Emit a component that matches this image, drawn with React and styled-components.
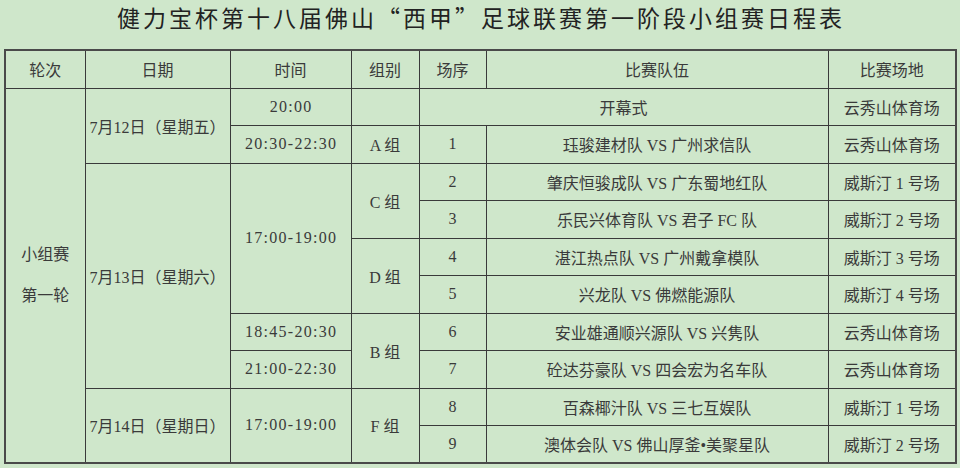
import React from "react";
import styled, { createGlobalStyle } from "styled-components";

const GlobalStyle = createGlobalStyle`
  html, body {
    margin: 0;
    padding: 0;
    background: #cfe7cb;
  }
  body {
    font-family: "Liberation Serif", "Noto Sans CJK SC", serif;
    color: #333;
  }
`;

const rows = [
  { time: "20:00", group: "", opening: true, venue: "云秀山体育场" },
  { time: "20:30-22:30", group: "A 组", no: 1, match: "珏骏建材队 VS 广州求信队", venue: "云秀山体育场" },
  { no: 2, match: "肇庆恒骏成队 VS 广东蜀地红队", venue: "威斯汀 1 号场" },
  { no: 3, match: "乐民兴体育队 VS 君子 FC 队", venue: "威斯汀 2 号场" },
  { no: 4, match: "湛江热点队 VS 广州戴拿模队", venue: "威斯汀 3 号场" },
  { no: 5, match: "兴龙队 VS 佛燃能源队", venue: "威斯汀 4 号场" },
  { no: 6, match: "安业雄通顺兴源队 VS 兴隽队", venue: "云秀山体育场" },
  { no: 7, match: "砼达芬豪队 VS 四会宏为名车队", venue: "云秀山体育场" },
  { no: 8, match: "百森椰汁队 VS 三七互娱队", venue: "威斯汀 1 号场" },
  { no: 9, match: "澳体会队 VS 佛山厚釜•美聚星队", venue: "威斯汀 2 号场" },
];

// spanned cells keyed by the row they start in
const spans = {
  0: [
    { col: "round", rows: 10, text: ["小组赛", "第一轮"] },
    { col: "date", rows: 2, text: "7月12日（星期五）" },
  ],
  2: [
    { col: "date", rows: 6, text: "7月13日（星期六）" },
    { col: "time", rows: 4, text: "17:00-19:00" },
    { col: "group", rows: 2, text: "C 组" },
  ],
  4: [{ col: "group", rows: 2, text: "D 组" }],
  6: [
    { col: "time", rows: 1, text: "18:45-20:30" },
    { col: "group", rows: 2, text: "B 组" },
  ],
  7: [{ col: "time", rows: 1, text: "21:00-22:30" }],
  8: [
    { col: "date", rows: 2, text: "7月14日（星期日）" },
    { col: "time", rows: 2, text: "17:00-19:00" },
    { col: "group", rows: 2, text: "F 组" },
  ],
};

const colOrder = ["round", "date", "time", "group"];

const App = () => {
  return (
    <Page>
      <GlobalStyle />
      <Title>健力宝杯第十八届佛山“西甲”足球联赛第一阶段小组赛日程表</Title>
      <Schedule>
        <colgroup>
          <col style={{ width: 80 }} />
          <col style={{ width: 145 }} />
          <col style={{ width: 121 }} />
          <col style={{ width: 68 }} />
          <col style={{ width: 67 }} />
          <col style={{ width: 342 }} />
          <col style={{ width: 128 }} />
        </colgroup>
        <thead>
          <HeadRow>
            <HeadCell>轮次</HeadCell>
            <HeadCell>日期</HeadCell>
            <HeadCell>时间</HeadCell>
            <HeadCell>组别</HeadCell>
            <HeadCell>场序</HeadCell>
            <HeadCell>比赛队伍</HeadCell>
            <HeadCell>比赛场地</HeadCell>
          </HeadRow>
        </thead>
        <tbody>
          {rows.map((r, i) => {
            const started = spans[i] || [];
            return (
              <Row key={i}>
                {colOrder.map((c) => {
                  const s = started.find((x) => x.col === c);
                  if (s) {
                    return (
                      <Cell key={c} rowSpan={s.rows} $digits={c === "time"}>
                        {Array.isArray(s.text) ? (
                          <Stacked>
                            {s.text.map((t) => (
                              <span key={t}>{t}</span>
                            ))}
                          </Stacked>
                        ) : (
                          s.text
                        )}
                      </Cell>
                    );
                  }
                  if (i <= 1 && c === "time")
                    return (
                      <Cell key={c} $digits>
                        {r.time}
                      </Cell>
                    );
                  if (i <= 1 && c === "group") return <Cell key={c}>{r.group}</Cell>;
                  return null;
                })}
                {r.opening ? (
                  <Cell colSpan={2}>开幕式</Cell>
                ) : (
                  <>
                    <Cell>{r.no}</Cell>
                    <Cell>{r.match}</Cell>
                  </>
                )}
                <Cell>{r.venue}</Cell>
              </Row>
            );
          })}
        </tbody>
      </Schedule>
    </Page>
  );
};

export default App;

const Page = styled.div`
  width: 960px;
  height: 468px;
  padding: 0 5px 0 4px;
  box-sizing: border-box;
  overflow: hidden;
`;

const Title = styled.h1`
  margin: 0;
  height: 49px;
  padding: 0 0 0 3px;
  box-sizing: border-box;
  text-align: center;
  font-family: "Noto Sans CJK SC", sans-serif;
  font-size: 23px;
  letter-spacing: 3px;
  font-weight: 400;
  line-height: 34px;
  color: #222;
`;

const Schedule = styled.table`
  width: 951px;
  table-layout: fixed;
  border-collapse: collapse;
  border: 2px solid #4a4a4a;
  font-family: "Liberation Serif", "Noto Sans CJK SC", serif;
  font-size: 16px;
  color: #3a3a3a;
`;

const HeadRow = styled.tr`
  height: 38px;
`;

const Row = styled.tr`
  height: 37.5px;
`;

const HeadCell = styled.th`
  border: 1px solid #3a3a3a;
  font-weight: 400;
  padding: 0;
  text-align: center;
  font-family: "Noto Sans CJK SC", sans-serif;
`;

const Cell = styled.td`
  border: 1px solid #3a3a3a;
  padding: 0 0 0 ${(p) => (p.$digits ? "1.3px" : "0")};
  text-align: center;
  white-space: nowrap;
  letter-spacing: ${(p) => (p.$digits ? "1.3px" : "normal")};
`;

const Stacked = styled.div`
  display: flex;
  flex-direction: column;
  align-items: center;
  line-height: 41px;
`;
